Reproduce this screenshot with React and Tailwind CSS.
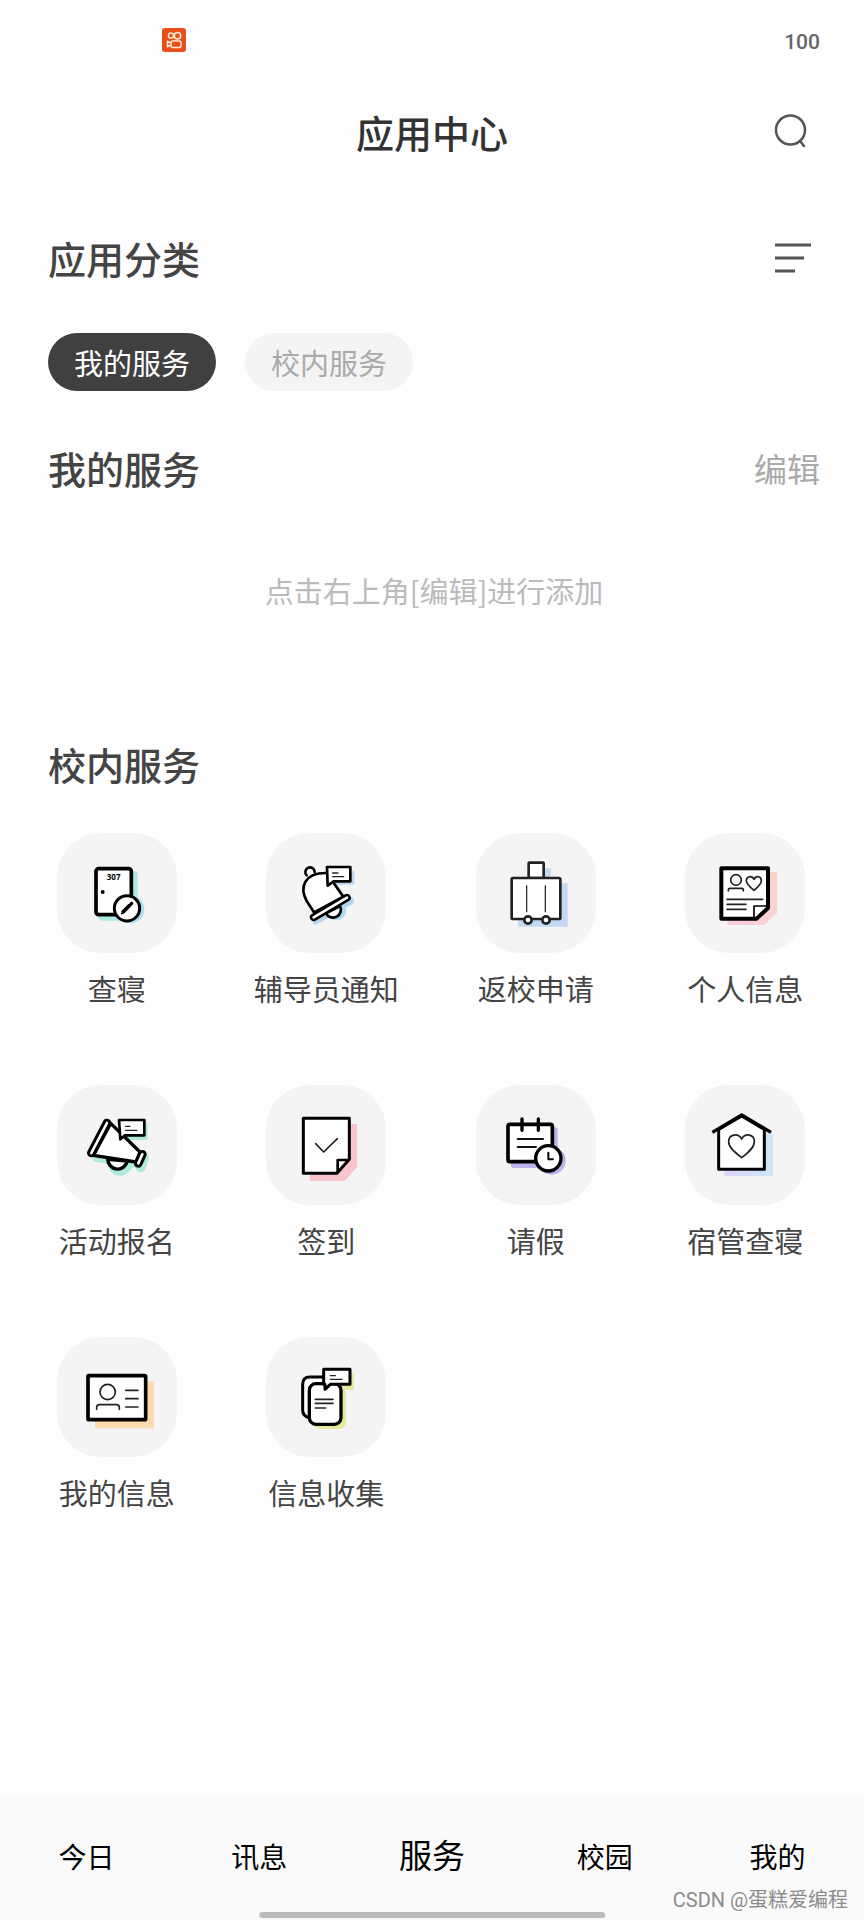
import { useState } from 'react';

const categories = ['我的服务', '校内服务'];

const tabs = ['今日', '讯息', '服务', '校园', '我的'];

const DormCheckIcon = () => (
  <svg viewBox="51 39 360 360" className="w-full h-full" fill="none" strokeLinecap="round" strokeLinejoin="round">
    <rect x="176" y="154" width="117" height="148" rx="10" fill="#a9ebe4" />
    <circle cx="271" cy="268" r="42" fill="#a9dff0" />
    <rect x="168" y="146" width="106" height="138" rx="8" fill="#fff" stroke="#000" strokeWidth="11" />
    <text x="221" y="180" textAnchor="middle" fontSize="24" fontWeight="700" fill="#000" fontFamily="Noto Sans">307</text>
    <circle cx="188" cy="216" r="6" fill="#000" />
    <circle cx="261" cy="265" r="38" fill="#fff" stroke="#000" strokeWidth="9" />
    <path d="M250 275L268 257" stroke="#000" strokeWidth="11" />
    <path d="M273 252L275 250" stroke="#000" strokeWidth="10" />
    <path d="M245 281L252 276" stroke="#000" strokeWidth="5" />
  </svg>
);

const BellIcon = () => (
  <svg viewBox="48 39 360 360" className="w-full h-full" fill="none" strokeLinecap="round" strokeLinejoin="round">
    <path d="M198 301L300 243" stroke="#b5d6f1" strokeWidth="24" />
    <path d="M236 282A24 24 0 0 0 282 262Z" fill="#a9dcf4" stroke="#a9dcf4" strokeWidth="8" />
    <path d="M245 152H313V194H262L290 232L240 200Z" fill="#bcd5ef" />
    <path d="M170 166A14 14 0 1 1 194 156" fill="#fff" stroke="#000" strokeWidth="8" />
    <path d="M192 277L170 243C148 202 162 158 230 159L280 230Z" fill="#fff" stroke="#000" strokeWidth="8" />
    <path d="M228 280A23 23 0 0 0 270 258Z" fill="#fff" stroke="#000" strokeWidth="8" />
    <path d="M191 292L291 233" stroke="#000" strokeWidth="23" />
    <path d="M191 292L291 233" stroke="#fff" strokeWidth="8" />
    <path d="M231 141H301V184H251L233 197Z" fill="#fff" stroke="#000" strokeWidth="8" />
    <path d="M248 159H264M248 170H281" stroke="#222" strokeWidth="4" />
  </svg>
);

const SuitcaseIcon = () => (
  <svg viewBox="48 39 360 360" className="w-full h-full" fill="none" strokeLinecap="round" strokeLinejoin="round">
    <path d="M225 145H273V190H323V320H174V200H225Z" fill="#c3d8f1" />
    <rect x="206" y="128" width="45" height="46" rx="2" fill="#fff" stroke="#222" strokeWidth="8" />
    <rect x="155" y="174" width="146" height="123" rx="4" fill="#fff" stroke="#222" strokeWidth="8" />
    <path d="M200 197V275M256 197V275" stroke="#333" strokeWidth="4" />
    <circle cx="204" cy="300" r="11" fill="#fff" stroke="#222" strokeWidth="8" />
    <circle cx="258" cy="300" r="11" fill="#fff" stroke="#222" strokeWidth="8" />
  </svg>
);

const ProfileIcon = () => (
  <svg viewBox="47 39 360 360" className="w-full h-full" fill="none" strokeLinecap="round" strokeLinejoin="round">
    <defs>
      <linearGradient id="profileShade" x1="0" y1="1" x2="1" y2="0">
        <stop offset="0" stopColor="#f8cfe0" />
        <stop offset="1" stopColor="#fad3c6" />
      </linearGradient>
    </defs>
    <path d="M174 156H323V279L284 315H174Z" fill="url(#profileShade)" />
    <path d="M156 145H296V264L262 296H156Z" fill="#fff" stroke="#000" strokeWidth="12" />
    <path d="M254 294V258H294" stroke="#000" strokeWidth="5" />
    <circle cx="200" cy="180" r="16" stroke="#222" strokeWidth="5" />
    <path d="M177 213V209Q177 205 182 205H217Q222 205 222 209V213" stroke="#222" strokeWidth="5" />
    <path d="M254 211C241 200 231 192 231 182C231 168 248 166 254 178C260 166 276 168 276 182C276 192 267 200 254 211Z" stroke="#222" strokeWidth="5" />
    <path d="M173 238H280M173 253H230M173 268H230" stroke="#222" strokeWidth="5" />
  </svg>
);

const MegaphoneIcon = () => (
  <svg viewBox="51 45 360 360" className="w-full h-full" fill="none" strokeLinecap="round" strokeLinejoin="round">
    <path d="M165 268L298 288" stroke="#aee9d9" strokeWidth="14" />
    <path d="M312 262L302 292" stroke="#aee9d9" strokeWidth="30" />
    <path d="M208 276A31 32 0 0 0 272 282Z" fill="#aee9d9" stroke="#aee9d9" strokeWidth="10" />
    <path d="M250 160H323V210H262Z" fill="#aee9d9" />
    <path d="M203 268A30 32 0 0 0 262 273Z" fill="#fff" stroke="#000" strokeWidth="10" />
    <path d="M212 160L300 246L288 276L160 256Z" fill="#fff" stroke="#000" strokeWidth="10" />
    <path d="M201 159L154 249" stroke="#000" strokeWidth="26" />
    <path d="M201 159L154 249" stroke="#fff" strokeWidth="8" />
    <path d="M307 253L295 280" stroke="#000" strokeWidth="26" />
    <path d="M307 253L295 280" stroke="#fff" strokeWidth="8" />
    <path d="M237 150H313V196H255L241 208Z" fill="#fff" stroke="#000" strokeWidth="8" />
    <path d="M257 169H270M257 181H291" stroke="#222" strokeWidth="4" />
  </svg>
);

const SignInIcon = () => (
  <svg viewBox="680 45 360 360" className="w-full h-full" fill="none" strokeLinecap="round" strokeLinejoin="round">
    <path d="M811 162H953V291L916 333H811Z" fill="#f8c5cd" />
    <path d="M792 145H930V268L893 310H792Z" fill="#fff" stroke="#000" strokeWidth="9" />
    <path d="M895 307V270H928" stroke="#000" strokeWidth="8" />
    <path d="M829 221L853 246L894 206" stroke="#222" strokeWidth="5" />
  </svg>
);

const LeaveIcon = () => (
  <svg viewBox="50 45 360 360" className="w-full h-full" fill="none" strokeLinecap="round" strokeLinejoin="round">
    <rect x="155" y="172" width="140" height="122" rx="8" fill="#bcb1ec" />
    <circle cx="277" cy="272" r="42" fill="#bcb1ec" />
    <rect x="146" y="163" width="133" height="112" rx="6" fill="#fff" stroke="#000" strokeWidth="11" />
    <path d="M188 147V181M237 147V181" stroke="#000" strokeWidth="10" />
    <path d="M175 207H251M175 231H230" stroke="#111" strokeWidth="6" />
    <circle cx="267" cy="265" r="38" fill="#fff" stroke="#000" strokeWidth="10" />
    <path d="M267 248V268H281" stroke="#000" strokeWidth="6" />
  </svg>
);

const HouseIcon = () => (
  <svg viewBox="680 45 360 360" className="w-full h-full" fill="none" strokeLinecap="round" strokeLinejoin="round">
    <defs>
      <linearGradient id="houseShade" x1="0" y1="0" x2="1" y2="0">
        <stop offset="0" stopColor="#dcd6fb" />
        <stop offset="1" stopColor="#cde6f8" />
      </linearGradient>
    </defs>
    <rect x="798" y="192" width="146" height="126" fill="url(#houseShade)" />
    <path d="M781 178L850 138L918 178V298H781Z" fill="#fff" stroke="#000" strokeWidth="9" />
    <path d="M762 187L850 135L938 187" stroke="#000" strokeWidth="10" strokeLinecap="butt" strokeLinejoin="miter" />
    <path d="M850 263C828 246 811 232 811 215C811 192 840 188 850 207C860 188 888 192 888 215C888 232 872 246 850 263Z" stroke="#222" strokeWidth="5" />
  </svg>
);

const IdCardIcon = () => (
  <svg viewBox="51 50 360 360" className="w-full h-full" fill="none" strokeLinecap="round" strokeLinejoin="round">
    <rect x="165" y="182" width="177" height="142" fill="#fcdcae" />
    <rect x="144" y="166" width="173" height="132" rx="3" fill="#fff" stroke="#000" strokeWidth="11" />
    <circle cx="203" cy="215" r="23" stroke="#222" strokeWidth="5" />
    <path d="M170 267V261Q170 253 179 253H229Q238 253 238 261V267" stroke="#222" strokeWidth="5" />
    <path d="M257 210H294M257 235H294M257 260H294" stroke="#222" strokeWidth="5" />
  </svg>
);

const CollectIcon = () => (
  <svg viewBox="680 50 360 360" className="w-full h-full" fill="none" strokeLinecap="round" strokeLinejoin="round">
    <rect x="820" y="202" width="100" height="124" rx="20" fill="#e5ea9c" />
    <path d="M866 158H944V208H880Z" fill="#e5ea9c" />
    <path d="M812 294Q790 288 790 270V192Q790 170 812 170H862V200H812Z" fill="#fff" stroke="#000" strokeWidth="9" />
    <rect x="810" y="190" width="95" height="122" rx="20" fill="#fff" stroke="#000" strokeWidth="10" />
    <path d="M853 147H932V192H873L857 207V192H853Z" fill="#fff" stroke="#000" strokeWidth="9" />
    <path d="M873 166H888M873 177H908" stroke="#222" strokeWidth="4" />
    <path d="M828 237H881M828 249H881M828 263H859" stroke="#222" strokeWidth="5" />
  </svg>
);

const services = [
  { name: '查寝', Icon: DormCheckIcon },
  { name: '辅导员通知', Icon: BellIcon },
  { name: '返校申请', Icon: SuitcaseIcon },
  { name: '个人信息', Icon: ProfileIcon },
  { name: '活动报名', Icon: MegaphoneIcon },
  { name: '签到', Icon: SignInIcon },
  { name: '请假', Icon: LeaveIcon },
  { name: '宿管查寝', Icon: HouseIcon },
  { name: '我的信息', Icon: IdCardIcon },
  { name: '信息收集', Icon: CollectIcon },
];

const StatusBar = () => (
  <div className="flex items-start justify-between h-21 pt-7 pl-[162px] pr-11">
    <svg viewBox="0 0 24 24" className="w-6 h-6" fill="none" stroke="#ffe9d6" strokeWidth="1.5">
      <rect width="24" height="24" rx="3" fill="#e8501a" stroke="none" />
      <circle cx="9" cy="7.5" r="2.6" />
      <circle cx="15.5" cy="7.8" r="3.2" />
      <rect x="9" y="13" width="10" height="6.500" rx="2" />
      <path d="M9 15L5.500 13.500V18.500L9 17" />
    </svg>
    <span className="text-[21px] leading-7 font-medium text-[#666] font-[Roboto,sans-serif]">100</span>
  </div>
);

const ServiceItem = ({ name, Icon }) => (
  <a href="#" className="flex flex-col items-center gap-[15px]">
    <span className="w-[120px] h-[120px] rounded-[44px] bg-[#f4f4f4]">
      <Icon />
    </span>
    <span className="text-[29px] leading-10 text-[#444] whitespace-nowrap">{name}</span>
  </a>
);

const App = () => {
  const [category, setCategory] = useState('我的服务');
  const [tab, setTab] = useState('服务');

  return (
    <div className="min-h-screen flex flex-col bg-[#fefefe] font-['Noto_Sans_CJK_SC',sans-serif]">
      <StatusBar />

      {/* Title */}
      <header className="grid grid-cols-[1fr_auto_1fr] items-center h-24 px-12">
        <h1 className="col-start-2 text-[38px] leading-12 font-medium text-[#333]">应用中心</h1>
        <button type="button" aria-label="搜索" className="justify-self-end mr-2">
          <svg viewBox="0 0 36 36" className="w-9 h-9" fill="none" stroke="#555" strokeWidth="2.5" strokeLinecap="round">
            <circle cx="18.5" cy="16" r="14.5" />
            <path d="M28 27L32 32" />
          </svg>
        </button>
      </header>

      <main className="flex-1">
        {/* Categories */}
        <section className="pt-[54px] pl-12 pr-[53px]">
          <div className="flex items-center justify-between">
            <h2 className="text-[38px] leading-12 font-medium text-[#444]">应用分类</h2>
            <button type="button" aria-label="分类菜单">
              <svg viewBox="0 0 36 32" className="w-9 h-8" stroke="#555" strokeWidth="3">
                <path d="M0 3H36M0 16H29M0 29H20" />
              </svg>
            </button>
          </div>
          <div className="flex gap-[29px] mt-[51px]">
            {categories.map((c) => (
              <button
                key={c}
                type="button"
                onClick={() => setCategory(c)}
                className={`h-[58px] px-[26px] rounded-full text-[29px] leading-10 ${
                  category === c ? 'bg-[#404040] text-white' : 'bg-[#f4f4f4] text-[#aaa]'
                }`}
              >
                {c}
              </button>
            ))}
          </div>
        </section>

        {/* My services */}
        <section className="pt-[53px] pl-12 pr-11">
          <div className="flex items-center justify-between">
            <h2 className="text-[38px] leading-12 font-medium text-[#444]">我的服务</h2>
            <button type="button" className="text-[33px] leading-12 text-[#aaa]">编辑</button>
          </div>
          <p className="mt-[78px] text-center text-[29px] leading-10 text-[#bbb]">点击右上角[编辑]进行添加</p>
        </section>

        {/* Campus services */}
        <section className="pt-[130px]">
          <h2 className="px-12 text-[38px] leading-12 font-medium text-[#444]">校内服务</h2>
          <div className="grid grid-cols-4 gap-y-[77px] mt-[45px] pl-3 pr-3.5">
            {services.map((s) => (
              <ServiceItem key={s.name} name={s.name} Icon={s.Icon} />
            ))}
          </div>
        </section>
      </main>

      {/* Bottom tabs */}
      <footer className="relative h-[125px] bg-[#fafafa]">
        <nav className="grid grid-cols-5 items-baseline pt-[35px]">
          {tabs.map((t) => (
            <button
              key={t}
              type="button"
              onClick={() => setTab(t)}
              className={`leading-12 text-black ${tab === t ? 'text-[33px]' : 'text-[28px]'}`}
            >
              {t}
            </button>
          ))}
        </nav>
        <div className="absolute bottom-0.5 left-1/2 -translate-x-1/2 w-2/5 h-1.5 rounded-full bg-[#bbb]"></div>
        <span className="absolute bottom-1 right-4 text-[20px] leading-8 text-[#8c8c8c] font-[Roboto,'Noto_Sans_CJK_SC',sans-serif]">
          CSDN @蛋糕爱编程
        </span>
      </footer>
    </div>
  );
};

export default App;
